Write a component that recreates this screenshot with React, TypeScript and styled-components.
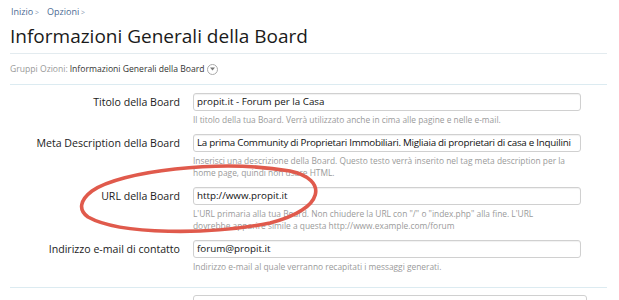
import React from "react";
import styled, {createGlobalStyle} from "styled-components";

const GlobalStyle = createGlobalStyle`
  html, body {
    margin: 0;
    padding: 0;
    background: #fff;
  }
  body {
    font-family: "Open Sans", "DejaVu Sans", sans-serif;
    color: #222;
  }
`;

const Page = styled.div`
  position: relative;
  width: 619px;
  height: 300px;
  overflow: hidden;
  padding: 6px 12px 0 10px;
  box-sizing: border-box;
`;

const Breadcrumb = styled.div`
  display: flex;
  gap: 8px;
  font-size: 9px;
  line-height: 12px;
  color: #4b6b94;
  padding-left: 1px;
`;

const Crumb = styled.span`
  &::after {
    content: " >";
    color: #8a9bb0;
    font-size: 7px;
  }
`;

const Title = styled.h1`
  margin: 4px 0 0;
  font-size: 19px;
  font-weight: 400;
  line-height: 26px;
  color: #1a1a1a;
  padding-bottom: 4px;
  border-bottom: 1px solid #e3ebef;
`;

const GroupBar = styled.div`
  display: flex;
  align-items: center;
  gap: 2px;
  font-size: 8.6px;
  height: 30px;
  color: #333;
  border-bottom: 1px solid #dcebf1;
`;

const GroupLabel = styled.span`
  color: #999;
`;

const DropButton = styled.span`
  display: inline-flex;
  align-items: center;
  justify-content: center;
  width: 9px;
  height: 9px;
  border: 1px solid #aaa;
  border-radius: 50%;
  margin-left: 1px;
`;

const Fieldset = styled.div`
  padding: 8px 0 14px;
  border-bottom: 1px solid #dcebf1;
`;

const Row = styled.div`
  display: grid;
  grid-template-columns: 170px 388px;
  column-gap: 13px;
  margin-bottom: 8px;

  &:last-child {
    margin-bottom: 0;
  }
`;

const Label = styled.label`
  grid-column: 1;
  text-align: right;
  font-size: 10.6px;
  line-height: 18px;
  color: #222;
  white-space: nowrap;
`;

const Input = styled.div<{ $fit?: boolean }>`
  grid-column: 2;
  height: 18px;
  box-sizing: border-box;
  border: 1px solid #d0d0d0;
  border-radius: 3px;
  box-shadow: inset 0 1px 1px rgba(0, 0, 0, 0.06);
  font-size: 9.8px;
  letter-spacing: ${p => p.$fit ? "-0.26px" : "0"};
  line-height: 16px;
  padding: 0 3px;
  color: #111;
  white-space: nowrap;
  overflow: hidden;
`;

const Hint = styled.div`
  grid-column: 2;
  margin-top: 3px;
  font-size: 8.4px;
  line-height: 12px;
  color: #9a9a9a;
  padding-right: 10px;
`;

const NextInput = styled.div`
  margin: 7px 0 0 183px;
  width: 392px;
  height: 18px;
  border: 1px solid #d0d0d0;
  border-radius: 3px;
`;

const Ring = styled.svg`
  position: absolute;
  left: 70px;
  top: 155px;
  pointer-events: none;
`;

const rows = [
  {
    label: "Titolo della Board",
    value: "propit.it - Forum per la Casa",
    hint: "Il titolo della tua Board. Verrà utilizzato anche in cima alle pagine e nelle e-mail.",
  },
  {
    label: "Meta Description della Board",
    value: "La prima Community di Proprietari Immobiliari. Migliaia di proprietari di casa e Inquilini",
    hint: "Inserisci una descrizione della Board. Questo testo verrà inserito nel tag meta description per la home page, quindi non usare HTML.",
    fit: true,
  },
  {
    label: "URL della Board",
    value: "http://www.propit.it",
    hint: "L'URL primaria alla tua Board. Non chiudere la URL con \"/\" o \"index.php\" alla fine. L'URL dovrebbe apparire simile a questa http://www.example.com/forum",
  },
  {
    label: "Indirizzo e-mail di contatto",
    value: "forum@propit.it",
    hint: "Indirizzo e-mail al quale verranno recapitati i messaggi generati.",
  },
];

export default function App() {
  return (
    <>
      <GlobalStyle/>
      <Page>
        <Breadcrumb>
          <Crumb>Inizio</Crumb>
          <Crumb>Opzioni</Crumb>
        </Breadcrumb>
        <Title>Informazioni Generali della Board</Title>
        <GroupBar>
          <GroupLabel>Gruppi Ozioni:</GroupLabel>
          <span>Informazioni Generali della Board</span>
          <DropButton>
            <svg width="5" height="4" viewBox="0 0 5 4">
              <path d="M0 0.5 H5 L2.5 3.5 Z" fill="#777"/>
            </svg>
          </DropButton>
        </GroupBar>
        <Fieldset>
          {rows.map((r) => (
            <Row key={r.label}>
              <Label>{r.label}</Label>
              <Input $fit={r.fit}>{r.value}</Input>
              <Hint>{r.hint}</Hint>
            </Row>
          ))}
        </Fieldset>
        <NextInput/>
        {/* hand drawn ring around the URL field */}
        <Ring width="260" height="90" viewBox="0 0 260 90">
          <path
            d="M22 36 C 50 16, 150 4, 220 16 C 258 24, 256 54, 200 68 C 140 80, 50 80, 18 62 C 8 55, 10 45, 22 36"
            fill="none"
            stroke="#e05a4c"
            strokeWidth="3.6"
            strokeLinecap="round"
          />
        </Ring>
      </Page>
    </>
  );
}
